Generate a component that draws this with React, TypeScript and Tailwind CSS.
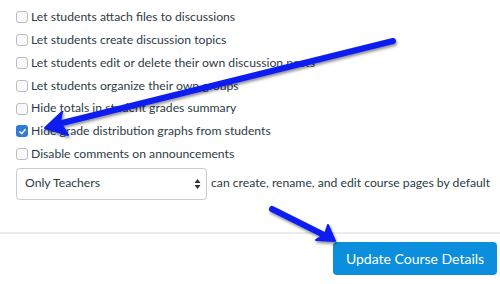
import React from "react";

const rows: { label: string; checked?: boolean }[] = [
  { label: "Let students attach files to discussions" },
  { label: "Let students create discussion topics" },
  { label: "Let students edit or delete their own discussion posts" },
  { label: "Let students organize their own groups" },
  { label: "Hide totals in student grades summary" },
  { label: "Hide grade distribution graphs from students", checked: true },
  { label: "Disable comments on announcements" },
];

function Box({ checked }: { checked?: boolean }) {
  if (checked) {
    return (
      <span className="w-[12px] h-[12px] rounded-[3px] bg-[#2f7bd6] flex items-center justify-center shrink-0">
        <svg width="9" height="9" viewBox="0 0 10 10">
          <path d="M2 5.2 L4.2 7.4 L8 2.8" stroke="white" strokeWidth="1.6" fill="none" strokeLinecap="round" strokeLinejoin="round" />
        </svg>
      </span>
    );
  }
  return <span className="w-[12px] h-[12px] rounded-[3px] border border-[#b9bec2] bg-[#fafafa] shrink-0" />;
}

export default function App() {
  return (
    <div className="relative w-[500px] h-[284px] bg-white overflow-hidden text-[#2d3b45]" style={{ fontFamily: "Lato, 'Liberation Sans', sans-serif" }}>
      <div className="pl-[16px] pt-[6px] flex flex-col">
        {rows.map((r) => (
          <div key={r.label} className="h-[22.8px] flex items-center gap-[3px] text-[12.2px] whitespace-nowrap">
            <Box checked={r.checked} />
            <span>{r.label}</span>
          </div>
        ))}
        <div className="mt-[2px] flex items-center gap-[4px] text-[12.2px] whitespace-nowrap">
          <div className="w-[191px] h-[32px] border border-[#c7cdd1] rounded-[4px] flex items-center justify-between pl-[8px] pr-[5px]">
            <span>Only Teachers</span>
            <svg width="7" height="12" viewBox="0 0 7 12">
              <path d="M0.5 5 L3.5 1 L6.5 5 Z" fill="#333" />
              <path d="M0.5 7 L3.5 11 L6.5 7 Z" fill="#333" />
            </svg>
          </div>
          <span>can create, rename, and edit course pages by default</span>
        </div>
      </div>
      <div className="mt-[32px] h-[2px] bg-[#ececec]" />
      <div className="flex justify-end pr-[3px] mt-[8px]">
        <div className="w-[164px] h-[33px] rounded-[4px] bg-[#0b8fdc] text-white text-[14px] flex items-center justify-center">
          Update Course Details
        </div>
      </div>
      <svg className="absolute inset-0 pointer-events-none" width="500" height="284" viewBox="0 0 500 284">
        <defs>
          <filter id="sh" x="-20%" y="-50%" width="140%" height="200%">
            <feDropShadow dx="1" dy="2" stdDeviation="1.5" floodColor="#000" floodOpacity="0.45" />
          </filter>
        </defs>
        <g filter="url(#sh)">
          <path d="M393 41 L62 123" stroke="#0a1ff0" strokeWidth="6" strokeLinecap="round" fill="none" />
          <path d="M45 128 L62 112 L60 122 L68 135 Z" fill="#0a1ff0" stroke="#0a1ff0" strokeWidth="2" strokeLinejoin="round" />
          <path d="M272 209 L324 235" stroke="#0a1ff0" strokeWidth="6" strokeLinecap="round" fill="none" />
          <path d="M335 241 L328 225 L325 234 L316 240 Z" fill="#0a1ff0" stroke="#0a1ff0" strokeWidth="2" strokeLinejoin="round" />
        </g>
      </svg>
    </div>
  );
}
